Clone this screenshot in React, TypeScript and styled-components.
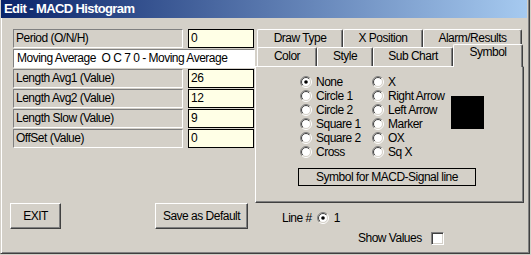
import React, { useId } from 'react';
import styled, { createGlobalStyle } from 'styled-components';

const GlobalStyle = createGlobalStyle`
  html, body {
    margin: 0;
    padding: 0;
    background: #d4d0c8;
  }
  body {
    font-family: "Liberation Sans", Arial, sans-serif;
    font-size: 12px;
    letter-spacing: -0.5px;
    color: #000;
  }
`;

const Window = styled.div`
  width: 530px;
  height: 254px;
  box-sizing: border-box;
  display: flex;
  flex-direction: column;
  background: #d4d0c8;
  border-left: 1px solid #d4d0c8;
  border-right: 1px solid #404040;
  border-bottom: 1px solid #404040;
  box-shadow: inset 1px 0 #fff, inset -1px -1px #808080;
`;

const TitleBar = styled.div`
  height: 18px;
  margin-right: 2px;
  padding-left: 3px;
  background: linear-gradient(to right, #0a246a, #a6caf0);
  color: #fff;
  font-weight: bold;
  font-size: 13px;
  letter-spacing: -0.6px;
  line-height: 18px;
`;

const Body = styled.div`
  display: flex;
  padding-top: 11px;
`;

const LeftCol = styled.div`
  width: 254px;
  box-sizing: border-box;
  padding-left: 12px;
  display: flex;
  flex-direction: column;
`;

const Fields = styled.div`
  display: flex;
  flex-direction: column;
  gap: 1px;
`;

const FieldRow = styled.div`
  display: flex;
  gap: 5px;
`;

const Box = styled.div<{ $w: number }>`
  width: ${(p) => p.$w}px;
  height: 19px;
  box-sizing: border-box;
  padding-left: 2px;
  line-height: 17px;
  white-space: nowrap;
  overflow: hidden;
`;

const Label = styled(Box)`
  background: #d4d0c8;
  border: 1px solid;
  border-color: #808080 #fff #fff #808080;
`;

const Value = styled(Box)`
  background: #ffffe6;
  border: 1px solid #000;
`;

const Combo = styled(Box)`
  background: #fff;
  border: 1px solid;
  border-color: #808080 #fff #fff #808080;
  padding-left: 3px;
`;

const ButtonRow = styled.div`
  margin-top: 55px;
  margin-left: -3px;
  width: 238px;
  display: flex;
  justify-content: space-between;
`;

const Button = styled.button<{ $w: number }>`
  width: ${(p) => p.$w}px;
  height: 26px;
  box-sizing: border-box;
  padding: 0;
  background: #d4d0c8;
  font-family: inherit;
  font-size: 12px;
  letter-spacing: -0.5px;
  color: #000;
  border: 1px solid;
  border-color: #fff #404040 #404040 #fff;
  box-shadow: inset -1px -1px #808080;
`;

const RightCol = styled.div`
  width: 269px;
  display: flex;
  flex-direction: column;
`;

const TabRow = styled.div<{ $h: number }>`
  display: flex;
  align-items: flex-start;
  padding-left: 2px;
  height: ${(p) => p.$h}px;
`;

const Tab = styled.div<{ $w: number; $active?: boolean }>`
  width: ${(p) => p.$w}px;
  height: ${(p) => (p.$active ? 23 : 19)}px;
  margin-top: ${(p) => (p.$active ? -3 : 0)}px;
  box-sizing: border-box;
  position: relative;
  z-index: ${(p) => (p.$active ? 2 : 0)};
  background: #d4d0c8;
  border-top: 1px solid #fff;
  border-left: 1px solid #fff;
  border-right: 1px solid #404040;
  border-radius: 2px 2px 0 0;
  box-shadow: inset -1px 0 #808080;
  text-align: center;
  line-height: ${(p) => (p.$active ? 15 : 16)}px;
  white-space: nowrap;
`;

const Panel = styled.div`
  height: 137px;
  box-sizing: border-box;
  border: 1px solid;
  border-color: #fff #404040 #404040 #fff;
  box-shadow: inset -1px -1px #808080;
  padding: 8px 0 0 44px;
`;

const RadioGrid = styled.div`
  display: grid;
  grid-template-columns: 72px 79px 33px;
  grid-template-rows: repeat(6, 14px);
  grid-auto-flow: column;
`;

const RadioItem = styled.label`
  display: flex;
  align-items: center;
  gap: 4px;
  white-space: nowrap;
`;

const Swatch = styled.div`
  grid-column: 3;
  grid-row: 2 / span 3;
  margin-top: 7px;
  width: 33px;
  height: 33px;
  background: #000;
`;

const Caption = styled.div`
  margin-top: 9px;
  margin-left: -2px;
  width: 178px;
  height: 18px;
  box-sizing: border-box;
  border: 1px solid #000;
  text-align: center;
  line-height: 16px;
`;

const LineRow = styled.div`
  margin-top: 8px;
  height: 14px;
  padding-left: 27px;
  display: flex;
  align-items: center;
  gap: 5px;
`;

const ShowRow = styled.div`
  margin-top: 6px;
  height: 14px;
  padding-left: 103px;
  display: flex;
  align-items: center;
  gap: 9px;
`;

const CheckBox = styled.span`
  width: 13px;
  height: 13px;
  box-sizing: border-box;
  background: #fff;
  border: 1px solid;
  border-color: #808080 #fff #fff #808080;
  box-shadow: inset 1px 1px #404040, inset -1px -1px #d4d0c8;
`;

function Radio({ checked }: { checked?: boolean }) {
  const id = useId().replace(/:/g, '');
  return (
    <svg width="12" height="12" viewBox="0 0 12 12">
      <defs>
        <linearGradient id={`o${id}`} x1="0" y1="0" x2="1" y2="1">
          <stop offset="0.5" stopColor="#808080" />
          <stop offset="0.5" stopColor="#ffffff" />
        </linearGradient>
        <linearGradient id={`i${id}`} x1="0" y1="0" x2="1" y2="1">
          <stop offset="0.5" stopColor="#404040" />
          <stop offset="0.5" stopColor="#d4d0c8" />
        </linearGradient>
      </defs>
      <circle cx="6" cy="6" r="5.5" fill="none" stroke={`url(#o${id})`} />
      <circle cx="6" cy="6" r="4.5" fill="#fff" stroke={`url(#i${id})`} />
      {checked && <circle cx="6" cy="6" r="1.8" fill="#000" />}
    </svg>
  );
}

const fields = [
  { label: 'Length Avg1 (Value)', value: '26' },
  { label: 'Length Avg2 (Value)', value: '12' },
  { label: 'Length Slow (Value)', value: '9' },
  { label: 'OffSet (Value)', value: '0' },
];

const symbols = [
  'None', 'Circle 1', 'Circle 2', 'Square 1', 'Square 2', 'Cross',
  'X', 'Right Arrow', 'Left Arrow', 'Marker', 'OX', 'Sq X',
];

export default function App() {
  return (
    <>
      <GlobalStyle />
      <Window>
        <TitleBar>Edit - MACD Histogram</TitleBar>
        <Body>
          <LeftCol>
            <Fields>
              <FieldRow>
                <Label $w={170}>Period (O/N/H)</Label>
                <Value $w={66}>0</Value>
              </FieldRow>
              <Combo $w={242}>Moving Average&nbsp; O C 7 0 - Moving Average</Combo>
              {fields.map((f) => (
                <FieldRow key={f.label}>
                  <Label $w={170}>{f.label}</Label>
                  <Value $w={66}>{f.value}</Value>
                </FieldRow>
              ))}
            </Fields>
            <ButtonRow>
              <Button $w={51}>EXIT</Button>
              <Button $w={93}>Save as Default</Button>
            </ButtonRow>
          </LeftCol>
          <RightCol>
            <TabRow $h={18}>
              <Tab $w={86}>Draw Type</Tab>
              <Tab $w={80}>X Position</Tab>
              <Tab $w={99}>Alarm/Results</Tab>
            </TabRow>
            <TabRow $h={19}>
              <Tab $w={60}>Color</Tab>
              <Tab $w={56}>Style</Tab>
              <Tab $w={80}>Sub Chart</Tab>
              <Tab $w={70} $active>Symbol</Tab>
            </TabRow>
            <Panel>
              <RadioGrid>
                {symbols.map((s, i) => (
                  <RadioItem key={s}>
                    <Radio checked={i === 0} />
                    {s}
                  </RadioItem>
                ))}
                <Swatch />
              </RadioGrid>
              <Caption>Symbol for MACD-Signal line</Caption>
            </Panel>
            <LineRow>
              Line #
              <Radio checked />
              1
            </LineRow>
            <ShowRow>
              Show Values
              <CheckBox />
            </ShowRow>
          </RightCol>
        </Body>
      </Window>
    </>
  );
}
